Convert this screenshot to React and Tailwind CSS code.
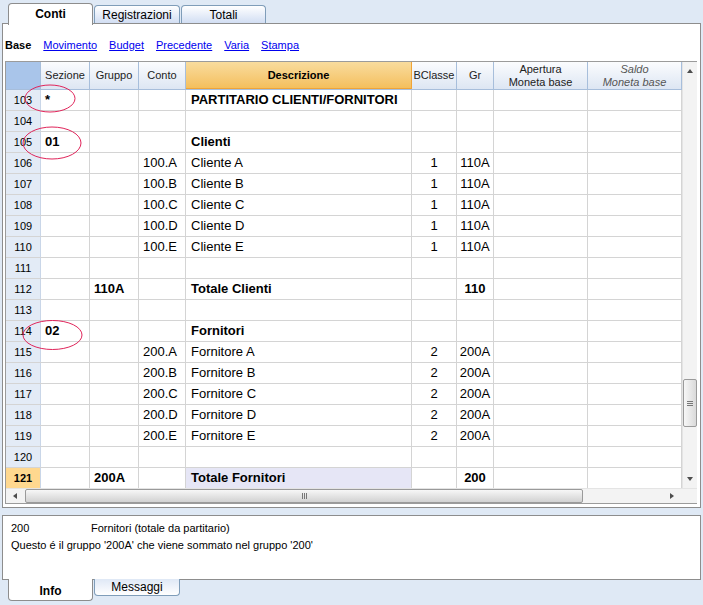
import React from "react";

const rows = [
  { n: 103, sez: "*", des: "PARTITARIO CLIENTI/FORNITORI", bold: true },
  { n: 104 },
  { n: 105, sez: "01", des: "Clienti", bold: true },
  { n: 106, con: "100.A", des: "Cliente A", bcl: "1", gr: "110A" },
  { n: 107, con: "100.B", des: "Cliente B", bcl: "1", gr: "110A" },
  { n: 108, con: "100.C", des: "Cliente C", bcl: "1", gr: "110A" },
  { n: 109, con: "100.D", des: "Cliente D", bcl: "1", gr: "110A" },
  { n: 110, con: "100.E", des: "Cliente E", bcl: "1", gr: "110A" },
  { n: 111 },
  { n: 112, gru: "110A", des: "Totale Clienti", gr: "110", bold: true },
  { n: 113 },
  { n: 114, sez: "02", des: "Fornitori", bold: true },
  { n: 115, con: "200.A", des: "Fornitore A", bcl: "2", gr: "200A" },
  { n: 116, con: "200.B", des: "Fornitore B", bcl: "2", gr: "200A" },
  { n: 117, con: "200.C", des: "Fornitore C", bcl: "2", gr: "200A" },
  { n: 118, con: "200.D", des: "Fornitore D", bcl: "2", gr: "200A" },
  { n: 119, con: "200.E", des: "Fornitore E", bcl: "2", gr: "200A" },
  { n: 120 },
  { n: 121, gru: "200A", des: "Totale Fornitori", gr: "200", bold: true, sel: true },
];

function Tab({ label, active, bottom, w }) {
  if (active) {
    return (
      <div
        className={`${w} flex items-center justify-center font-bold text-[12px] text-black bg-gradient-to-b ${
          bottom
            ? "h-[22px] rounded-b-[4px] border border-t-0 border-[#8d8d8d] from-white to-white -mt-px pt-[3px]"
            : "h-[22px] rounded-t-[4px] border border-b-0 border-[#8d8d8d] from-white to-white relative z-10 -mb-px pb-[1px]"
        }`}
      >
        {label}
      </div>
    );
  }
  return (
    <div
      className={`${w} flex items-center justify-center text-[12px] text-black bg-gradient-to-b border border-[#7f9db9] ${
        bottom
          ? "h-[17px] rounded-b-[4px] border-t-0 from-[#dfe8f6] to-[#ffffff] -mt-px pb-[1px]"
          : "h-[19px] rounded-t-[4px] border-b-0 from-[#ffffff] to-[#cfdcf2]"
      }`}
    >
      {label}
    </div>
  );
}

function HeaderCell({ w, children, className = "" }) {
  return (
    <div
      className={`${w} shrink-0 h-full flex flex-col items-center justify-center border-r border-[#a7bedb] bg-gradient-to-b from-[#fbfcfe] to-[#dde6f3] text-[11px] leading-[13px] text-[#222] ${className}`}
    >
      {children}
    </div>
  );
}

function Cell({ w, children, align = "left", bold, bg = "bg-white" }) {
  const al = align === "center" ? "justify-center" : "justify-start pl-[4px]";
  return (
    <div
      className={`${w} ${bg} shrink-0 h-full flex items-center ${al} border-r border-[#d4d4d4] overflow-hidden whitespace-nowrap ${
        bold ? "font-bold" : ""
      } text-[13px] text-black`}
    >
      {children}
    </div>
  );
}

function Arrow({ dir }) {
  const pts = {
    up: "1,5 4,1 7,5",
    down: "1,1 4,5 7,1",
    left: "5,1 1,4 5,7",
    right: "1,1 5,4 1,7",
  }[dir];
  const vb = dir === "up" || dir === "down" ? "0 0 8 6" : "0 0 6 8";
  const size = dir === "up" || dir === "down" ? "w-[8px] h-[6px]" : "w-[6px] h-[8px]";
  return (
    <svg viewBox={vb} className={size}>
      <polygon points={pts} fill="#4d4d4d" />
    </svg>
  );
}

export default function App() {
  return (
    <div
      className="w-[703px] h-[605px] bg-[#dfe9f5] relative overflow-hidden flex flex-col"
      style={{ fontFamily: '"Liberation Sans", Arial, sans-serif' }}
    >
      {/* top tabs */}
      <div className="h-[24px] flex items-end pl-[8px] gap-[1px] shrink-0">
        <Tab label="Conti" active w="w-[85px]" />
        <Tab label="Registrazioni" w="w-[86px]" />
        <Tab label="Totali" w="w-[85px]" />
      </div>

      {/* main panel */}
      <div className="mx-[2px] h-[485px] -mt-px border border-[#8d8d8d] bg-white flex flex-col shrink-0">
        {/* link row */}
        <div className="h-[37px] flex items-center pl-[2px] pt-[5px] gap-[12px] text-[11px] shrink-0">
          <span className="font-bold text-black">Base</span>
          {["Movimento", "Budget", "Precedente", "Varia", "Stampa"].map((l) => (
            <span key={l} className="text-[#0000ee] underline">
              {l}
            </span>
          ))}
        </div>

        {/* grid */}
        <div className="ml-[2px] mr-[3px] h-[443px] border border-[#9b9b9b] border-r-0 flex flex-col shrink-0">
          <div className="flex h-[426px]">
            {/* table */}
            <div className="flex flex-col w-[676px]">
              {/* header */}
              <div className="flex h-[28px] border-b border-[#a7bedb] shrink-0">
                <div className="w-[35px] shrink-0 h-full bg-[#a9c5ea] border-r border-[#a7bedb]" />
                <HeaderCell w="w-[49px]">Sezione</HeaderCell>
                <HeaderCell w="w-[49px]">Gruppo</HeaderCell>
                <HeaderCell w="w-[47px]">Conto</HeaderCell>
                <div className="w-[226px] shrink-0 h-full flex items-center justify-center font-bold text-[11px] text-black bg-gradient-to-b from-[#f9dc9d] to-[#f4bf5c] border-b border-r border-[#f0a437] -mb-px">
                  Descrizione
                </div>
                <HeaderCell w="w-[45px]">BClasse</HeaderCell>
                <HeaderCell w="w-[37px]">Gr</HeaderCell>
                <HeaderCell w="w-[94px]">
                  <span>Apertura</span>
                  <span>Moneta base</span>
                </HeaderCell>
                <HeaderCell w="w-[94px]" className="italic text-[#555]">
                  <span>Saldo</span>
                  <span>Moneta base</span>
                </HeaderCell>
              </div>
              {/* rows */}
              {rows.map((r) => (
                <div key={r.n} className="flex h-[21px] border-b border-[#d4d4d4] shrink-0">
                  <div
                    className={`w-[35px] shrink-0 h-full flex items-center justify-center text-[11px] border-r border-[#c9d6e8] ${
                      r.sel ? "bg-[#ffd88f] font-bold" : "bg-[#e3ebf6]"
                    } text-black`}
                  >
                    {r.n}
                  </div>
                  <Cell w="w-[49px]" bold={r.bold}>{r.sez}</Cell>
                  <Cell w="w-[49px]" bold={r.bold}>{r.gru}</Cell>
                  <Cell w="w-[47px]">{r.con}</Cell>
                  <Cell w="w-[226px]" bold={r.bold} bg={r.sel ? "bg-[#e6e6f6]" : "bg-white"}>
                    <span className="pl-[1px]">{r.des}</span>
                  </Cell>
                  <Cell w="w-[45px]" align="center">{r.bcl}</Cell>
                  <Cell w="w-[37px]" align="center" bold={r.bold}>{r.gr}</Cell>
                  <Cell w="w-[94px]" />
                  <Cell w="w-[94px]" />
                </div>
              ))}
            </div>
            {/* vertical scrollbar */}
            <div className="w-[16px] h-full bg-[#f3f3f3] border-l border-[#e4e4e4] flex flex-col items-center">
              <div className="h-[18px] flex items-center justify-center">
                <Arrow dir="up" />
              </div>
              <div className="flex-1 w-full relative">
                <div className="absolute left-0 right-0 top-[299px] h-[48px] rounded-[2px] border border-[#9a9a9a] bg-gradient-to-r from-[#f7f7f7] to-[#d9d9d9] flex flex-col items-center justify-center gap-[1px]">
                  <div className="w-[6px] h-px bg-[#777]" />
                  <div className="w-[6px] h-px bg-[#777]" />
                  <div className="w-[6px] h-px bg-[#777]" />
                </div>
              </div>
              <div className="h-[18px] flex items-center justify-center">
                <Arrow dir="down" />
              </div>
            </div>
          </div>
          {/* horizontal scrollbar */}
          <div className="h-[16px] flex bg-[#f3f3f3] border-t border-[#e4e4e4]">
            <div className="w-[18px] flex items-center justify-center">
              <Arrow dir="left" />
            </div>
            <div className="flex-1 flex items-stretch">
              <div className="w-[558px] ml-[1px] rounded-[2px] border border-[#9a9a9a] bg-gradient-to-b from-[#f7f7f7] to-[#d2d2d2] flex items-center justify-center gap-[1px]">
                <div className="w-px h-[6px] bg-[#777]" />
                <div className="w-px h-[6px] bg-[#777]" />
                <div className="w-px h-[6px] bg-[#777]" />
              </div>
            </div>
            <div className="w-[18px] flex items-center justify-center mr-[16px]">
              <Arrow dir="right" />
            </div>
          </div>
        </div>
      </div>

      {/* info panel */}
      <div className="mx-[2px] mt-[7px] h-[65px] border border-[#8d8d8d] bg-white px-[8px] pt-[4px] text-[11px] leading-[17px] text-black shrink-0">
        <div className="flex">
          <span className="w-[80px]">200</span>
          <span>Fornitori (totale da partitario)</span>
        </div>
        <div>Questo é il gruppo '200A' che viene sommato nel gruppo '200'</div>
      </div>

      {/* bottom tabs */}
      <div className="flex items-start pl-[8px] gap-[1px]">
        <Tab label="Info" active bottom w="w-[85px]" />
        <Tab label="Messaggi" bottom w="w-[86px]" />
      </div>

      {/* annotation ellipses */}
      <svg className="absolute left-0 top-0 w-[703px] h-[605px] pointer-events-none" viewBox="0 0 703 605">
        <ellipse cx="50" cy="98.5" rx="25" ry="13.5" fill="none" stroke="#e0245a" strokeWidth="1" />
        <ellipse cx="52" cy="143" rx="29" ry="16" fill="none" stroke="#e0245a" strokeWidth="1" />
        <ellipse cx="52.5" cy="335" rx="29.5" ry="14.5" fill="none" stroke="#e0245a" strokeWidth="1" />
      </svg>
    </div>
  );
}
